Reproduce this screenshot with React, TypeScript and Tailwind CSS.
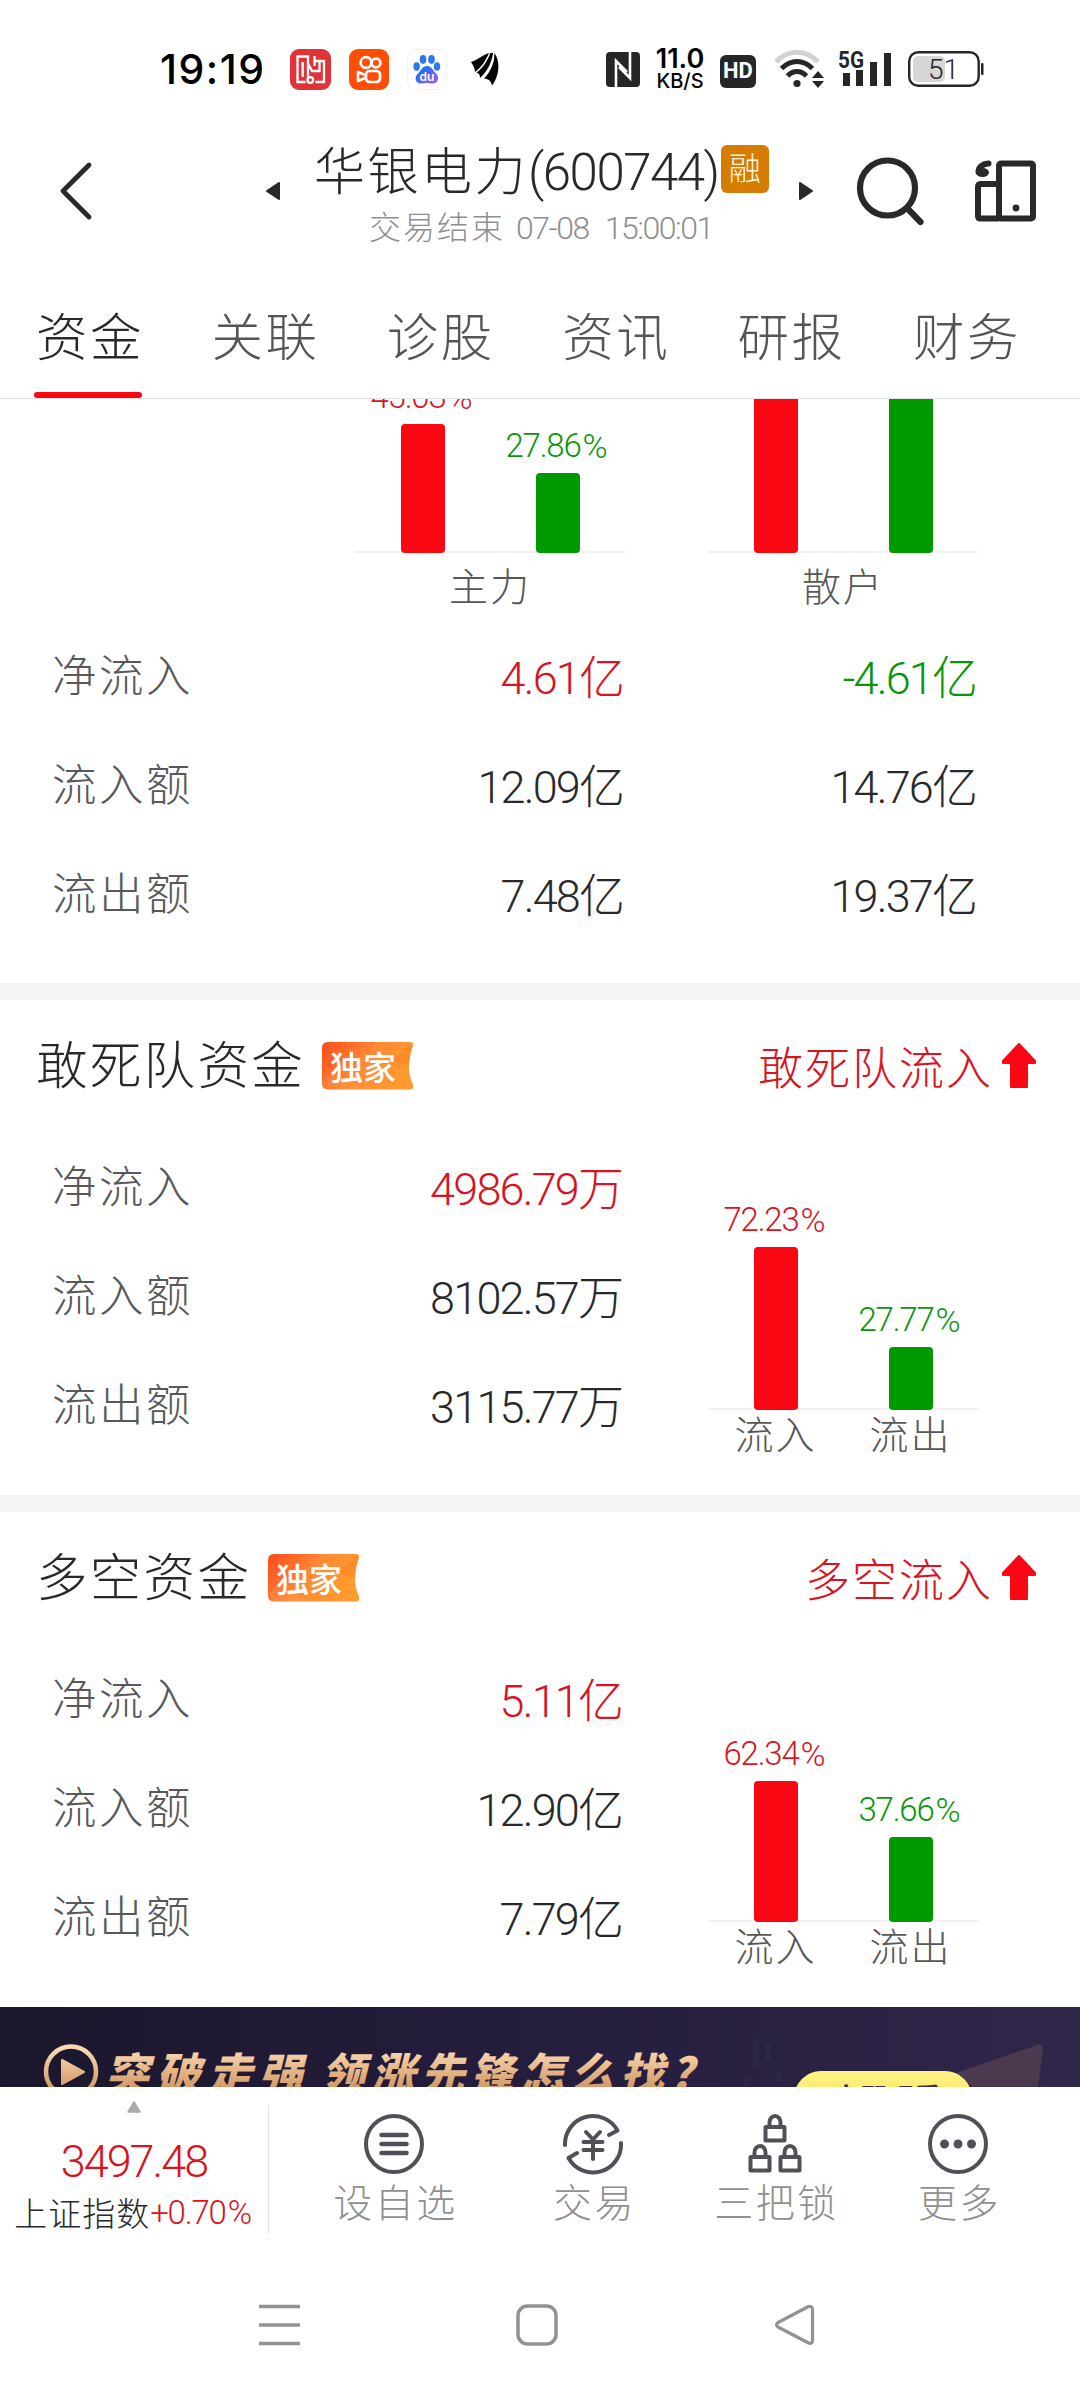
import type { ReactNode } from 'react';

type Tone = 'up' | 'down' | 'plain';

interface AmountProps {
  value: string;
  unit: string;
  tone?: Tone;
}

interface Bar {
  percent: string;
  height: number;
  tone: 'up' | 'down';
  label?: string;
}

interface FundSectionProps {
  title: string;
  trend: string;
  rows: { label: string; value: string; unit: string; tone?: Tone }[];
  bars: Bar[];
}

const tabs = ['资金', '关联', '诊股', '资讯', '研报', '财务'];

const toneText: Record<Tone, string> = {
  up: 'text-[#d8141f]',
  down: 'text-[#0a960a]',
  plain: 'text-[#29292b]',
};

const summaryRows: { label: string; main: AmountProps; retail: AmountProps }[] = [
  {
    label: '净流入',
    main: { value: '4.61', unit: '亿', tone: 'up' },
    retail: { value: '-4.61', unit: '亿', tone: 'down' },
  },
  {
    label: '流入额',
    main: { value: '12.09', unit: '亿' },
    retail: { value: '14.76', unit: '亿' },
  },
  {
    label: '流出额',
    main: { value: '7.48', unit: '亿' },
    retail: { value: '19.37', unit: '亿' },
  },
];

function StatusBar() {
  return (
    <div className="flex h-[138px] items-center pl-[160px] text-black">
      <span className="w-[130px] font-['Inter'] text-[41px] leading-none font-medium tracking-[1.5px]">19:19</span>
      {/* Notification icons */}
      <svg width="41" height="41" viewBox="0 0 41 41">
        <rect width="41" height="41" rx="9" fill="#df3338" />
        <g fill="none" stroke="#fff" strokeWidth="2.3">
          <path d="M15.5 33H7.5V7.5H18V28M12.7 13V28M18 14.5L22 22H29.5V12M23.5 12H34V33H25.5M24.5 7V17" />
          <circle cx="20.3" cy="31" r="2.8" />
        </g>
      </svg>
      <svg className="ml-[18px]" width="40" height="41" viewBox="0 0 40 41">
        <rect width="40" height="41" rx="9" fill="#ff4d05" />
        <g fill="none" stroke="#fff" strokeWidth="2.7" strokeLinejoin="round">
          <circle cx="17" cy="13.5" r="5.4" />
          <circle cx="27" cy="14" r="4.4" />
          <rect x="17" y="22" width="14" height="11" rx="3.5" />
          <path d="M16 26L9 23V32L16 29" />
        </g>
      </svg>
      <svg className="ml-[18px]" width="41" height="41" viewBox="0 0 41 41">
        <defs>
          <linearGradient id="paw" x1="0" y1="0" x2="1" y2="1">
            <stop offset="0.3" stopColor="#2a6cf5" />
            <stop offset="1" stopColor="#a55cf0" />
          </linearGradient>
        </defs>
        <rect x="0.5" y="0.5" width="39" height="40" rx="9" fill="#fff" stroke="#f3f3f3" />
        <ellipse cx="9.6" cy="17.5" rx="3.2" ry="4.2" fill="#2878f0" />
        <ellipse cx="16" cy="10.5" rx="3.3" ry="4.4" fill="#2878f0" />
        <ellipse cx="24.5" cy="10.5" rx="3.3" ry="4.4" fill="#2878f0" />
        <ellipse cx="30" cy="17.5" rx="3.2" ry="4.2" fill="#2878f0" />
        <path d="M20 17C25 17 26 22 29 24.500C33 28 31 34.500 26 34.500C23 34.500 22 34 20 34C18 34 17 34.500 14 34.500C8 34.500 7 28 11 24.500C14 22 15 17 20 17Z" fill="url(#paw)" />
        <text x="20" y="31.5" textAnchor="middle" fill="#fff" fontFamily="Inter" fontWeight="600" fontSize="12">du</text>
      </svg>
      <svg className="ml-[22px]" width="30" height="34" viewBox="0 0 30 34">
        <path d="M1 10C8 8 12 3 19 1C16 8 11 16 5 20C5 16 3 13 1 10Z" fill="#000" />
        <path d="M20.300 1L23 1C22 10 17 20 10 26C10 23 9 21 6.500 20.500C13 16 18 8 20.300 1Z" fill="#000" />
        <path d="M24.300 1C31 9 29 25 22 33.500C21 29 19 27 14 26.500C21 20 25 9 24.300 1Z" fill="#000" />
      </svg>

      {/* System icons */}
      <svg className="ml-[106px]" width="34" height="35" viewBox="0 0 34 35">
        <rect width="34" height="35" rx="4" fill="#262628" />
        <path d="M10 35V9L21 20M24 0V26L13 15" fill="none" stroke="#fff" strokeWidth="2.6" />
      </svg>
      <div className="ml-[14px] flex w-[52px] flex-col items-center font-['Inter'] text-black">
        <span className="text-[27px] leading-[24px] font-semibold whitespace-nowrap">11.0</span>
        <span className="text-[20px] leading-[20px] font-medium whitespace-nowrap">KB/S</span>
      </div>
      <div className="mt-[4px] ml-[14px] flex h-[33px] w-[36px] items-center justify-center rounded-[6px] bg-[#262628] font-['Roboto'] text-[22px] leading-none font-bold text-white">
        HD
      </div>
      <svg className="ml-[18px]" width="50" height="40" viewBox="0 0 50 40">
        <g fill="none" strokeWidth="5">
          <path d="M2 13C14 0 32 0 44 13" stroke="#d2d2d2" />
          <path d="M7.5 19.5C17 10 29 10 38.5 19.5" stroke="#262628" />
          <path d="M13.5 27C19 21 27 21 32.500 27" stroke="#262628" />
        </g>
        <circle cx="23" cy="34.5" r="3.6" fill="#262628" />
        <path d="M38 29L44 22L50 29ZM38 32L44 39L50 32Z" fill="#262628" />
      </svg>
      <svg className="ml-[14px]" width="56" height="40" viewBox="0 0 56 40">
        <text x="0" y="18.5" fill="#262628" fontFamily="Roboto" fontWeight="700" fontSize="24.5" textLength="26" lengthAdjust="spacingAndGlyphs">5G</text>
        <path d="M5 24H12V37H5ZM18 21H25V37H18ZM32 13H39V37H32ZM46 4H53V37H46Z" fill="#262628" />
      </svg>
      <svg className="ml-[14px]" width="76" height="36" viewBox="0 0 76 36">
        <rect x="5" y="5" width="32" height="26" rx="5" fill="#d6d6d6" />
        <rect x="1.2" y="1.2" width="69.5" height="33.5" rx="9" fill="none" stroke="#262628" strokeWidth="2.4" />
        <rect x="73" y="12" width="2.5" height="12" rx="1" fill="#262628" />
        <text x="35.5" y="27.5" textAnchor="middle" fill="#262628" fontFamily="Roboto" fontSize="28">51</text>
      </svg>
    </div>
  );
}

function Header() {
  return (
    <div className="flex h-[106px] items-center pl-[59px] text-[#29292b]">
      <svg width="34" height="60" viewBox="0 0 34 60">
        <path d="M30 4L4 30L30 56" fill="none" stroke="#29292b" strokeWidth="4.8" strokeLinecap="round" strokeLinejoin="round" />
      </svg>
      <svg className="ml-[173px]" width="14" height="18" viewBox="0 0 14 18">
        <path d="M1 9L13 1V17Z" fill="#29292b" stroke="#29292b" strokeWidth="2" strokeLinejoin="round" />
      </svg>
      <div className="ml-[23px] w-[480px] pt-[12px]">
        <div className="flex h-[62px] items-center pl-[11px] whitespace-nowrap">
          <span className="text-[51px] leading-none tracking-[2.5px]">华银电力</span>
          <span className="text-[51px] leading-none tracking-[-1.5px]">(600744)</span>
          <span className="mt-[-7px] ml-[2px] flex h-[48px] w-[48px] items-center justify-center rounded-[6px] bg-[#d67c00] text-[32px] leading-none text-[#fff8e0]">
            融
          </span>
        </div>
        <div className="flex h-[50px] items-center pl-[66px] whitespace-nowrap text-[#8f8f92]">
          <span className="text-[32px] leading-none tracking-[2px]">交易结束</span>
          <span className="ml-[11px] text-[32px] leading-none tracking-[-1.5px]">07-08</span>
          <span className="ml-[16px] text-[32px] leading-none tracking-[-1.5px]">15:00:01</span>
        </div>
      </div>
      <svg className="ml-[16px]" width="14" height="18" viewBox="0 0 14 18">
        <path d="M13 9L1 1V17Z" fill="#29292b" stroke="#29292b" strokeWidth="2" strokeLinejoin="round" />
      </svg>
      <svg className="ml-[43px]" width="70" height="70" viewBox="0 0 70 70">
        <circle cx="31.5" cy="32" r="27.5" fill="none" stroke="#29292b" strokeWidth="6.2" />
        <path d="M52 53L64.5 66" stroke="#29292b" strokeWidth="6.2" strokeLinecap="round" />
      </svg>
      <svg className="ml-[49px]" width="62" height="62" viewBox="0 0 62 62">
        <g fill="none" stroke="#29292b" strokeWidth="6" strokeLinejoin="round">
          <rect x="24" y="3.5" width="34" height="55" rx="2" />
          <path d="M24 24H5.5Q3 24 3 27V56Q3 58.5 5.5 58.5H24" />
          <path d="M13.5 3.5C7 4 3.5 7.5 3.500 12" strokeLinecap="round" />
        </g>
        <ellipse cx="7.5" cy="12.5" rx="6.5" ry="4.5" fill="#29292b" />
        <circle cx="41" cy="48" r="3.4" fill="#29292b" />
      </svg>
    </div>
  );
}

function Tabs() {
  return (
    <div className="flex h-[155px] border-b border-[#e4e4e4] pl-[34px]">
      {tabs.map((tab, index) => (
        <div key={tab} className="flex w-[175.4px] shrink-0 flex-col items-start justify-end">
          <span
            className={`mb-[23px] pl-[2px] text-[51.5px] leading-[60px] tracking-[2.5px] whitespace-nowrap ${
              index === 0 ? 'text-[#29292b]' : 'text-[#555557]'
            }`}
          >
            {tab}
          </span>
          <span className={`h-[6px] w-[108px] rounded-full ${index === 0 ? 'bg-[#f90713]' : ''}`} />
        </div>
      ))}
    </div>
  );
}

function Amount({ value, unit, tone = 'plain' }: AmountProps) {
  return (
    <div className={`flex items-center justify-end pt-[5px] text-[45px] leading-none ${toneText[tone]}`}>
      <span className="tracking-[-1.8px]">{value}</span>
      <span className="text-[46px]">{unit}</span>
    </div>
  );
}

function RowLabel({ children }: { children: ReactNode }) {
  return <span className="pt-[4px] text-[44.5px] leading-none tracking-[2.5px] text-[#58585a]">{children}</span>;
}

function BarPair({ bars }: { bars: Bar[] }) {
  return (
    <div className="flex w-[270px] items-end border-b-2 border-[#f0f0f0]">
      {bars.map((bar) => (
        <div key={bar.percent} className="-mb-[2px] flex w-[135px] flex-col items-center">
          <div
            className={`mb-[7px] flex pr-[3px] text-[33px] leading-[40px] tracking-[-1.2px] whitespace-nowrap ${toneText[bar.tone]}`}
          >
            {bar.percent.slice(0, -1)}
            <span className="ml-[2px] text-[34px]">%</span>
          </div>
          <div
            className={`w-[44px] rounded-[4px] ${bar.tone === 'up' ? 'bg-[#f90713]' : 'bg-[#009a00]'}`}
            style={{ height: bar.height }}
          />
        </div>
      ))}
    </div>
  );
}

function ExclusiveBadge() {
  return (
    <svg width="92" height="48" viewBox="0 0 92 48">
      <defs>
        <linearGradient id="badge" x1="0" y1="0" x2="1" y2="0.4">
          <stop offset="0" stopColor="#ff4a1c" />
          <stop offset="0.55" stopColor="#ff8a35" />
          <stop offset="1" stopColor="#ff9a2e" />
        </linearGradient>
      </defs>
      <path d="M6 0H88Q92 0 91 4C86 17 85 28 91 43Q92 47.5 88 47.5H6Q0 47.5 0 41V6Q0 0 6 0Z" fill="url(#badge)" />
      <path d="M90 2L70 19L87 24Z" fill="#fb8422" opacity="0.6" />
      <path d="M0 40L10 30L40 47H5Z" fill="#ff9a50" opacity="0.35" />
      <text x="41" y="37.5" textAnchor="middle" fill="#fff" fontFamily="Noto Sans CJK SC" fontWeight="500" fontSize="33">独家</text>
    </svg>
  );
}

function SummarySection() {
  return (
    <section className="h-[584px]">
      {/* Charts are scrolled half way under the tabs */}
      <div className="flex h-[154px] items-end overflow-hidden pl-[355px]">
        <BarPair
          bars={[
            { percent: '45.03%', height: 129, tone: 'up' },
            { percent: '27.86%', height: 80, tone: 'down' },
          ]}
        />
        <div className="w-[83px]" />
        <BarPair
          bars={[
            { percent: '54.97%', height: 157, tone: 'up' },
            { percent: '72.14%', height: 206, tone: 'down' },
          ]}
        />
      </div>
      <div className="flex h-[68px] items-center pt-[2px] pl-[355px] text-[39px] leading-none tracking-[2px] text-[#58585a]">
        <span className="w-[270px] text-center">主力</span>
        <span className="ml-[83px] w-[270px] text-center">散户</span>
      </div>
      {summaryRows.map((row) => (
        <div key={row.label} className="grid h-[109px] grid-cols-[223px_350px_353px] items-center pl-[52px]">
          <RowLabel>{row.label}</RowLabel>
          <Amount {...row.main} />
          <Amount {...row.retail} />
        </div>
      ))}
    </section>
  );
}

function FundSection({ title, trend, rows, bars }: FundSectionProps) {
  return (
    <section className="h-[495px]">
      <div className="flex h-[132px] items-center pr-[43px] pl-[36px]">
        <h2 className="mr-[17px] pt-[2px] text-[51.5px] leading-none tracking-[2.3px] text-[#29292b]">{title}</h2>
        <ExclusiveBadge />
        <span className="ml-auto pt-[6px] text-[45px] leading-none tracking-[2px] text-[#d8141f]">{trend}</span>
        <svg className="ml-[8px]" width="36" height="46" viewBox="0 0 36 46">
          <path d="M18 1L34 18V20H26V44H10V20H2V18Z" fill="#f90713" stroke="#f90713" strokeWidth="2" strokeLinejoin="round" />
        </svg>
      </div>
      <div className="flex">
        <div className="w-[624px] pl-[52px]">
          {rows.map((row) => (
            <div key={row.label} className="flex h-[109px] items-center justify-between">
              <RowLabel>{row.label}</RowLabel>
              <Amount value={row.value} unit={row.unit} tone={row.tone} />
            </div>
          ))}
        </div>
        <div className="ml-[84px] w-[270px]">
          <div className="flex h-[278px] items-end">
            <BarPair bars={bars} />
          </div>
          <div className="flex h-[50px] items-center pt-[2px] text-[39px] leading-none tracking-[2px] text-[#58585a]">
            {bars.map((bar) => (
              <span key={bar.label} className="w-[135px] text-center">
                {bar.label}
              </span>
            ))}
          </div>
        </div>
      </div>
    </section>
  );
}

function Banner() {
  return (
    <div className="h-[80px] overflow-hidden bg-gradient-to-r from-[#1b172c] via-[#251d3d] to-[#30264a]">
      <svg width="1080" height="120" viewBox="0 0 1080 120">
        <defs>
          <linearGradient id="gold" gradientUnits="userSpaceOnUse" x1="0" y1="42" x2="0" y2="90">
            <stop offset="0" stopColor="#fbd9b0" />
            <stop offset="1" stopColor="#c98a55" />
          </linearGradient>
          <linearGradient id="lemon" x1="0" y1="0" x2="0" y2="1">
            <stop offset="0" stopColor="#fff285" />
            <stop offset="1" stopColor="#ffdf45" />
          </linearGradient>
        </defs>
        <path d="M956 66L1040 37L1043 41L1037 90H985Z" fill="#4a394f" />
        <path d="M756 31V62M768 35V55M779 60V75M747 72V85" stroke="#2d2c4d" strokeWidth="6" opacity="0.5" />
        <circle cx="71" cy="64.5" r="25" fill="none" stroke="url(#gold)" strokeWidth="4.5" />
        <path d="M62 53L84 65L62 77Z" fill="url(#gold)" stroke="url(#gold)" strokeWidth="2" strokeLinejoin="round" />
        <g fill="url(#gold)" fontFamily="Noto Sans CJK SC" fontWeight="900" fontStyle="italic" fontSize="44">
          <text x="105" y="83" textLength="198">突破走强</text>
          <text x="321" y="83" textLength="372">领涨先锋怎么找?</text>
        </g>
        <rect x="794" y="64" width="178" height="54" rx="27" fill="url(#lemon)" />
        <text x="887" y="101" textAnchor="middle" fill="#3b2b4d" fontFamily="Noto Sans CJK SC" fontWeight="700" fontSize="27">立即观看</text>
      </svg>
    </div>
  );
}

function ToolItem({ label, className, children }: { label: string; className: string; children: ReactNode }) {
  return (
    <div className={`flex flex-col items-center pt-[26px] ${className}`}>
      <svg width="62" height="62" viewBox="0 0 62 62" fill="none" stroke="#505158" strokeWidth="4" strokeLinecap="round" strokeLinejoin="round">
        {children}
      </svg>
      <span className="mt-[5px] pl-[4px] text-[39px] leading-[48px] tracking-[2.5px] text-[#8f8f92]">{label}</span>
    </div>
  );
}

function Lock({ x, y }: { x: number; y: number }) {
  return (
    <g transform={`translate(${x} ${y})`}>
      <rect x="0" y="12" width="19" height="13.5" rx="0.5" />
      <path d="M4 11V7.5A5.5 6.5 0 0 1 15 7.5V11" />
    </g>
  );
}

function BottomBar() {
  return (
    <div className="flex h-[163px]">
      <div className="flex w-[268px] flex-col items-center">
        <svg className="mt-[14px]" width="14" height="12" viewBox="0 0 14 12">
          <path d="M7 1L13 11H1Z" fill="#a9aaac" stroke="#a9aaac" strokeWidth="1.5" strokeLinejoin="round" />
        </svg>
        <span className="mt-[23px] text-[45px] leading-[52px] tracking-[-2px] text-[#d8141f]">3497.48</span>
        <div className="mt-[3px] flex items-center pr-[3px] text-[33px] leading-[40px] whitespace-nowrap">
          <span className="pt-[4px] tracking-[1px] text-[#29292b]">上证指数</span>
          <span className="tracking-[-1.2px] text-[#d8141f]">
            +0.70<span className="ml-[2px]">%</span>
          </span>
        </div>
      </div>
      <div className="mt-[18px] mr-[25px] h-[129px] w-px bg-[#e2e2e2]" />
      <ToolItem label="设自选" className="w-[199px]">
        <circle cx="31" cy="31" r="28" />
        <path d="M18.5 22H43.5M18.5 31H43.5M18.5 40H43.5" strokeWidth="4.5" />
      </ToolItem>
      <ToolItem label="交易" className="w-[199px]">
        <path d="M3 32A28 28 0 0 1 55.5 17.5L47 22" />
        <path d="M59 30A28 28 0 0 1 6.5 45L15 40" />
        <path d="M24 19L31 26.5L38 19M31 27V46M21.5 29H40.5M21.5 37H40.5" />
      </ToolItem>
      <ToolItem label="三把锁" className="w-[165px]">
        <Lock x={21.5} y={2} />
        <Lock x={6.5} y={32} />
        <Lock x={36.5} y={32} />
      </ToolItem>
      <ToolItem label="更多" className="w-[201px]">
        <circle cx="31" cy="31" r="28" />
        <path d="M17.5 31H17.51M31 31H31.01M44.5 31H44.51" strokeWidth="9" />
      </ToolItem>
    </div>
  );
}

function NavigationBar() {
  return (
    <div className="flex h-[150px] items-center gap-[216px] pl-[258px]">
      <svg width="42" height="42" viewBox="0 0 42 42">
        <path d="M1 2.5H42M1 21H42M1 39.5H42" stroke="#929292" strokeWidth="3.5" />
      </svg>
      <svg width="42" height="42" viewBox="0 0 42 42">
        <rect x="2" y="2" width="38" height="38" rx="9.5" fill="none" stroke="#929292" strokeWidth="3.5" />
      </svg>
      <svg width="42" height="42" viewBox="0 0 42 42">
        <path d="M34.5 2.5Q38.5 1.5 38.5 6V36Q38.5 40.5 34.5 39L4 23Q1 21 4 18.5Z" fill="none" stroke="#929292" strokeWidth="3.2" strokeLinejoin="round" />
      </svg>
    </div>
  );
}

export default function App() {
  return (
    <div className="h-[2400px] w-[1080px] overflow-hidden bg-white font-['Roboto','Noto_Sans_CJK_SC',sans-serif] font-light">
      <StatusBar />
      <Header />
      <Tabs />
      <SummarySection />
      <div className="h-[17px] bg-[#f4f4f4]" />
      <FundSection
        title="敢死队资金"
        trend="敢死队流入"
        rows={[
          { label: '净流入', value: '4986.79', unit: '万', tone: 'up' },
          { label: '流入额', value: '8102.57', unit: '万' },
          { label: '流出额', value: '3115.77', unit: '万' },
        ]}
        bars={[
          { percent: '72.23%', height: 163, tone: 'up', label: '流入' },
          { percent: '27.77%', height: 63, tone: 'down', label: '流出' },
        ]}
      />
      <div className="h-[17px] bg-[#f4f4f4]" />
      <FundSection
        title="多空资金"
        trend="多空流入"
        rows={[
          { label: '净流入', value: '5.11', unit: '亿', tone: 'up' },
          { label: '流入额', value: '12.90', unit: '亿' },
          { label: '流出额', value: '7.79', unit: '亿' },
        ]}
        bars={[
          { percent: '62.34%', height: 141, tone: 'up', label: '流入' },
          { percent: '37.66%', height: 85, tone: 'down', label: '流出' },
        ]}
      />
      <Banner />
      <BottomBar />
      <NavigationBar />
    </div>
  );
}
